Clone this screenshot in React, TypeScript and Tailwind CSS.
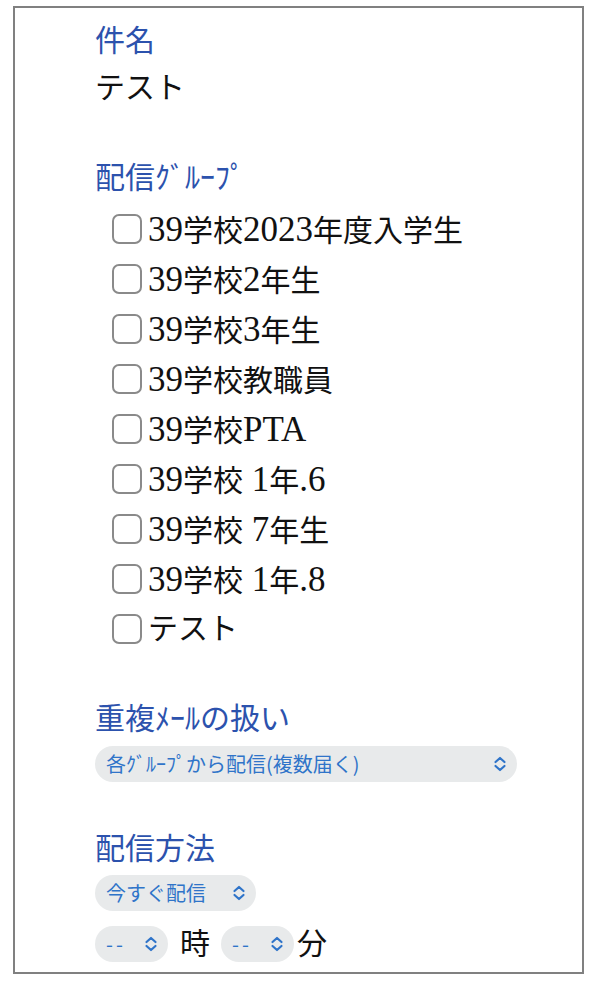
const serif = "font-['Liberation_Serif','Noto_Sans_CJK_JP',serif]";
const sans = "font-['Noto_Sans_CJK_JP','Noto_Sans',sans-serif]";

const groups = [
  "39学校2023年度入学生",
  "39学校2年生",
  "39学校3年生",
  "39学校教職員",
  "39学校PTA",
  "39学校 1年.6",
  "39学校 7年生",
  "39学校 1年.8",
  "テスト",
];

// latin runs are drawn a bit larger than the kanji, like the original
function Label({ text }: { text: string }) {
  const parts = text.split(/([0-9A-Za-z. ]+)/).filter(Boolean);
  return (
    <span className="whitespace-pre leading-none">
      {parts.map((p, i) =>
        /^[0-9A-Za-z. ]+$/.test(p) ? (
          <span key={i} className="text-[35px]">
            {p}
          </span>
        ) : (
          <span key={i}>{p}</span>
        )
      )}
    </span>
  );
}

function Chevron() {
  return (
    <svg width="14" height="16" viewBox="0 0 14 16" fill="none" className="shrink-0">
      <path d="M2.5 6 L7 2 L11.5 6" stroke="#2f74c9" strokeWidth="2.2" strokeLinecap="round" strokeLinejoin="round" />
      <path d="M2.5 10 L7 14 L11.5 10" stroke="#2f74c9" strokeWidth="2.2" strokeLinecap="round" strokeLinejoin="round" />
    </svg>
  );
}

function Select({ label, width, spaced = false }: { label: string; width: string; spaced?: boolean }) {
  return (
    <div
      className={`${width} ${sans} h-9 shrink-0 rounded-full bg-[#e8eaeb] flex items-center justify-between pl-[11px] pr-[10px] text-[20px] leading-none text-[#2f74c9]`}
    >
      <span className={`whitespace-nowrap ${spaced ? "tracking-[3px]" : ""}`}>{label}</span>
      <Chevron />
    </div>
  );
}

function Heading({ children, className = "" }: { children: React.ReactNode; className?: string }) {
  return <h2 className={`text-[30px] leading-[46px] text-[#2c52ad] ${className}`}>{children}</h2>;
}

export default function App() {
  return (
    <div className={`min-h-screen bg-white ${serif}`}>
      <div className="ml-[13px] mt-[6px] w-[571px] h-[968px] border-2 border-[#808080] pl-[80px] pt-[10px] text-[#111]">
        <Heading>件名</Heading>
        <p className="text-[30px] leading-[48px]">テスト</p>

        <Heading className="mt-[43px]">配信ｸﾞﾙｰﾌﾟ</Heading>
        <div className="mt-[3px] pl-[17px] flex flex-col">
          {groups.map((g) => (
            <label key={g} className="h-[50px] flex items-center gap-[6px] text-[30px]">
              <span className="w-[30px] h-[30px] rounded-[7px] border-2 border-[#8a8a8a] bg-white shrink-0" />
              <Label text={g} />
            </label>
          ))}
        </div>

        <Heading className="mt-[42px]">重複ﾒｰﾙの扱い</Heading>
        <div className="mt-[4px]">
          <Select label="各ｸﾞﾙｰﾌﾟから配信(複数届く)" width="w-[422px]" />
        </div>

        <Heading className="mt-[44px]">配信方法</Heading>
        <div className="mt-[3px]">
          <Select label="今すぐ配信" width="w-[161px]" />
        </div>
        <div className="mt-[15px] h-9 flex items-center text-[30px] leading-none">
          <Select label="--" width="w-[73px]" spaced />
          <span className="ml-[12px] mr-[11px]">時</span>
          <Select label="--" width="w-[73px]" spaced />
          <span className="ml-[3px]">分</span>
        </div>
      </div>
    </div>
  );
}
